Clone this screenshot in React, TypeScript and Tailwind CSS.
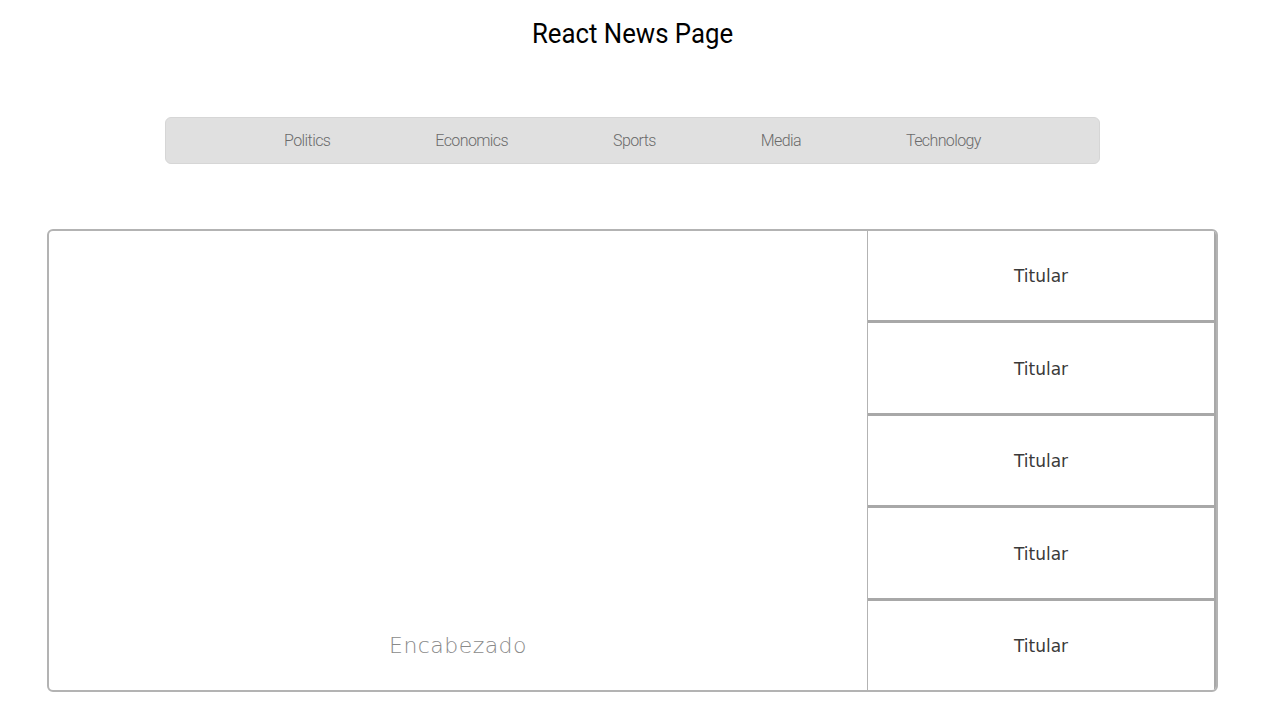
const categories = ['Politics', 'Economics', 'Sports', 'Media', 'Technology'];
const headlines = ['Titular', 'Titular', 'Titular', 'Titular', 'Titular'];

export default function App() {
  return (
    <div className="min-h-screen bg-white pt-[16px] w-[1265px]">
      <h1 className="text-center text-[28px] leading-[36px] text-black font-['Roboto',sans-serif] [transform:scaleX(0.92)]">
        React News Page
      </h1>

      <nav className="mx-auto mt-[65px] w-[935px] h-[47px] rounded-md bg-[#e0e0e0] border border-[#d6d6d6] flex items-center justify-center gap-[105px] font-['Roboto',sans-serif] font-light text-[16px] tracking-[-0.6px] text-[#6b6b6b]">
        {categories.map((c) => (
          <a key={c} href="#">
            {c}
          </a>
        ))}
      </nav>

      <main className="mx-auto mt-[65px] w-[1171px] h-[463px] flex border-2 border-[#b3b3b3] rounded-md overflow-hidden">
        {/* Featured */}
        <section className="flex-1 flex items-end justify-center pb-[28px]">
          <span className="text-[22px] text-[#8a8a8a] font-['DejaVu_Sans',sans-serif] tracking-[0.02em] [font-weight:200]">
            Encabezado
          </span>
        </section>

        {/* Headlines */}
        <aside className="w-[349px] flex flex-col border-l border-[#b3b3b3]">
          {headlines.map((h, i) => (
            <div
              key={i}
              className={`flex-1 flex items-center justify-center border-r-[2px] border-[#a8a8a8] ${i < headlines.length - 1 ? 'border-b-[3px]' : ''}`}
            >
              <span className="text-[17px] text-[#3a3a3a] font-['DejaVu_Sans',sans-serif] font-normal pt-[3px]">{h}</span>
            </div>
          ))}
        </aside>
      </main>
    </div>
  );
}
